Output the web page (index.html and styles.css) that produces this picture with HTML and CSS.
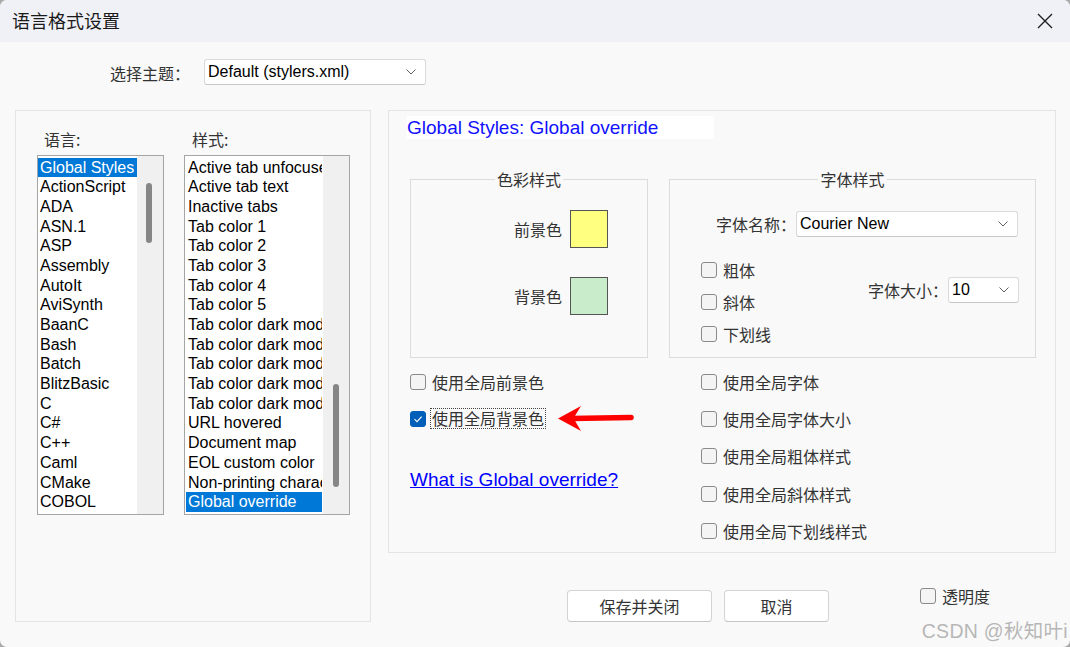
FILE: index.html
```html
<!DOCTYPE html>
<html lang="zh">
<head>
<meta charset="utf-8">
<title>语言格式设置</title>
<link rel="stylesheet" href="styles.css">
</head>
<body>
<div class="window">
  <div class="titlebar">
    <span class="title">语言格式设置</span>
    <svg class="close" width="16" height="16" viewBox="0 0 16 16"><path d="M1 1 L15 15 M15 1 L1 15" stroke="#1f1f1f" stroke-width="1.4" fill="none"/></svg>
  </div>

  <div class="theme-row">
    <span class="lbl">选择主题：</span>
    <div class="select theme-select">
      <span>Default (stylers.xml)</span>
      <svg width="10" height="6" viewBox="0 0 10 6"><path d="M0.5 0.5 L5 5 L9.5 0.5" stroke="#606060" stroke-width="1" fill="none"/></svg>
    </div>
  </div>

  <div class="main">
    <div class="left-panel">
      <span class="lbl list-label lang-label">语言:</span>
      <span class="lbl list-label style-label">样式:</span>

      <div class="listbox lang-list">
        <div class="items">
          <div class="item sel">Global Styles</div>
          <div class="item">ActionScript</div>
          <div class="item">ADA</div>
          <div class="item">ASN.1</div>
          <div class="item">ASP</div>
          <div class="item">Assembly</div>
          <div class="item">AutoIt</div>
          <div class="item">AviSynth</div>
          <div class="item">BaanC</div>
          <div class="item">Bash</div>
          <div class="item">Batch</div>
          <div class="item">BlitzBasic</div>
          <div class="item">C</div>
          <div class="item">C#</div>
          <div class="item">C++</div>
          <div class="item">Caml</div>
          <div class="item">CMake</div>
          <div class="item">COBOL</div>
        </div>
        <div class="scrollbar lang-scroll"><div class="thumb"></div></div>
      </div>

      <div class="listbox style-list">
        <div class="items">
          <div class="item">Active tab unfocused</div>
          <div class="item">Active tab text</div>
          <div class="item">Inactive tabs</div>
          <div class="item">Tab color 1</div>
          <div class="item">Tab color 2</div>
          <div class="item">Tab color 3</div>
          <div class="item">Tab color 4</div>
          <div class="item">Tab color 5</div>
          <div class="item">Tab color dark mode 1</div>
          <div class="item">Tab color dark mode 2</div>
          <div class="item">Tab color dark mode 3</div>
          <div class="item">Tab color dark mode 4</div>
          <div class="item">Tab color dark mode 5</div>
          <div class="item">URL hovered</div>
          <div class="item">Document map</div>
          <div class="item">EOL custom color</div>
          <div class="item">Non-printing characters</div>
          <div class="item sel">Global override</div>
        </div>
        <div class="scrollbar style-scroll"><div class="thumb"></div></div>
      </div>
    </div>

    <div class="right-col">
      <div class="right-panel">
        <div class="rp-title">Global Styles: Global override</div>

        <div class="groups">
          <fieldset class="group color-group">
            <legend>色彩样式</legend>
            <div class="color-grid">
              <span class="lbl">前景色</span>
              <span class="swatch fg"></span>
              <span class="lbl">背景色</span>
              <span class="swatch bg"></span>
            </div>
          </fieldset>

          <fieldset class="group font-group">
            <legend>字体样式</legend>
            <div class="font-name-row">
              <span class="lbl">字体名称：</span>
              <div class="select font-select">
                <span>Courier New</span>
                <svg width="10" height="6" viewBox="0 0 10 6"><path d="M0.5 0.5 L5 5 L9.5 0.5" stroke="#606060" stroke-width="1" fill="none"/></svg>
              </div>
            </div>
            <div class="font-opts">
              <div class="opt-col">
                <div class="check-row small"><span class="cb"></span><span class="lbl">粗体</span></div>
                <div class="check-row small"><span class="cb"></span><span class="lbl">斜体</span></div>
                <div class="check-row small"><span class="cb"></span><span class="lbl">下划线</span></div>
              </div>
              <div class="size-row">
                <span class="lbl">字体大小：</span>
                <div class="select size-select">
                  <span>10</span>
                  <svg width="10" height="6" viewBox="0 0 10 6"><path d="M0.5 0.5 L5 5 L9.5 0.5" stroke="#606060" stroke-width="1" fill="none"/></svg>
                </div>
              </div>
            </div>
          </fieldset>
        </div>

        <div class="checks">
          <div class="check-col">
            <div class="check-row"><span class="cb"></span><span class="lbl">使用全局前景色</span></div>
            <div class="check-row">
              <span class="cb on"><svg width="14" height="14" viewBox="0 0 14 14"><path d="M3.5 7.2 L6 9.6 L10.6 4.6" stroke="#ffffff" stroke-width="1.1" fill="none"/></svg></span>
              <span class="lbl focus">使用全局背景色</span>
              <svg class="arrow" width="78" height="28" viewBox="0 0 78 28"><path d="M14 13.5 L74 12.5" stroke="#ff0000" stroke-width="5.5" stroke-linecap="round" fill="none"/><path d="M1 13.5 L24 1 L16.5 13.3 L24 26 Z" fill="#ff0000"/></svg>
            </div>
            <a class="link" href="#">What is Global override?</a>
          </div>
          <div class="check-col">
            <div class="check-row"><span class="cb"></span><span class="lbl">使用全局字体</span></div>
            <div class="check-row"><span class="cb"></span><span class="lbl">使用全局字体大小</span></div>
            <div class="check-row"><span class="cb"></span><span class="lbl">使用全局粗体样式</span></div>
            <div class="check-row"><span class="cb"></span><span class="lbl">使用全局斜体样式</span></div>
            <div class="check-row"><span class="cb"></span><span class="lbl">使用全局下划线样式</span></div>
          </div>
        </div>
      </div>

      <div class="bottom-row">
        <button class="btn save">保存并关闭</button>
        <button class="btn cancel">取消</button>
        <div class="check-row transp"><span class="cb"></span><span class="lbl">透明度</span></div>
      </div>
    </div>
  </div>

  <div class="watermark">CSDN @秋知叶i</div>
</div>
</body>
</html>
```

FILE: styles.css
```css
* { box-sizing: border-box; }

html, body {
  margin: 0;
  padding: 0;
  background: #a9a9a9;
}

.window {
  position: relative;
  width: 1070px;
  height: 647px;
  background: #f9f9f9;
  border-radius: 7px;
  overflow: hidden;
  font-family: "Liberation Sans", "Noto Sans CJK SC", sans-serif;
  color: #000;
}

.lbl {
  font-family: "Noto Sans CJK SC", "Liberation Sans", sans-serif;
  font-size: 16px;
  color: #333;
  line-height: 20px;
  white-space: nowrap;
}

/* title bar */
.titlebar {
  height: 42px;
  background: #f0f1f6;
  display: flex;
  align-items: center;
  justify-content: space-between;
  padding: 0 17px 0 12px;
}
.title {
  font-family: "Noto Sans CJK SC", sans-serif;
  font-size: 18px;
  color: #1a1a1a;
  line-height: 22px;
  margin-top: -2px;
}
.close { margin-top: -1px; }

/* theme row */
.theme-row {
  display: flex;
  align-items: center;
  margin-top: 17px;
  padding-left: 110px;
  gap: 14px;
}
.theme-row .lbl { margin-top: 2px; }

.select {
  display: flex;
  align-items: center;
  justify-content: space-between;
  height: 26px;
  background: #fff;
  border: 1px solid #dadada;
  border-bottom-color: #c8c8c8;
  border-radius: 3px;
  padding: 0 9px 0 3px;
  font-size: 16px;
  color: #000;
}
.theme-select { width: 222px; }
.font-select { width: 222px; }
.size-select { width: 71px; }

/* main */
.main {
  display: flex;
  margin-top: 25px;
  padding-left: 15px;
  gap: 17px;
}

.left-panel {
  width: 356px;
  height: 512px;
  border: 1px solid #e4e4e4;
  display: grid;
  grid-template-columns: 127px 166px;
  grid-template-rows: 20px auto;
  column-gap: 20px;
  row-gap: 6px;
  padding: 18px 0 0 21px;
  align-content: start;
}
.lang-label { margin-left: 7px; }
.style-label { margin-left: 8px; }

.listbox {
  height: 360px;
  border: 1px solid #a5a5a5;
  background: #fff;
  display: flex;
  overflow: hidden;
}
.items {
  flex: 1;
  min-width: 0;
  padding-top: 1.5px;
}
.item {
  height: 19.7px;
  line-height: 20.5px;
  font-size: 16px;
  padding-left: 2px;
  white-space: nowrap;
  overflow: hidden;
  color: #000;
}
.style-list .item { margin: 0 1px; }
.item.sel {
  background: #0078d7;
  color: #fff;
}
.scrollbar {
  width: 26px;
  flex: none;
  background: #f0f0f0;
}
.thumb {
  width: 6px;
  border-radius: 3px;
  background: #868686;
}
.lang-scroll { padding: 27px 0 0 9px; }
.lang-scroll .thumb { height: 60px; }
.style-scroll { padding: 228px 0 0 10px; }
.style-scroll .thumb { height: 103px; }

/* right column */
.right-col {
  width: 668px;
  display: flex;
  flex-direction: column;
}
.right-panel {
  height: 443px;
  border: 1px solid #e4e4e4;
  padding-top: 5px;
}
.rp-title {
  margin-left: 18px;
  width: 307px;
  height: 23px;
  line-height: 23px;
  background: #fff;
  color: #1111ff;
  font-size: 19px;
  white-space: nowrap;
}

.groups {
  display: flex;
  gap: 21px;
  margin-top: 30px;
  padding-left: 21px;
}
.group {
  margin: 0;
  padding: 0;
  border: 1px solid #dcdcdc;
  height: 189px;
  min-width: 0;
}
.group legend {
  margin: 0 auto;
  padding: 0 2px;
  font-family: "Noto Sans CJK SC", sans-serif;
  font-size: 16px;
  line-height: 20px;
  color: #333;
}
.color-group { width: 238px; }
.font-group { width: 367px; }

.color-grid {
  display: grid;
  grid-template-columns: 151px 38px;
  column-gap: 8px;
  row-gap: 29px;
  align-items: center;
  margin-top: 21px;
}
.color-grid .lbl { text-align: right; }
.swatch {
  width: 38px;
  height: 38px;
  border: 1px solid #555;
}
.swatch.fg { background: #ffff80; }
.swatch.bg { background: #c9edca; }

.font-name-row {
  display: flex;
  align-items: center;
  margin-top: 22px;
  padding-left: 46px;
}
.font-opts {
  display: flex;
  margin-top: 17px;
  padding-left: 31px;
}
.opt-col { display: flex; flex-direction: column; }
.size-row {
  display: flex;
  align-items: center;
  margin-left: auto;
  margin-right: 16px;
  margin-top: 23px;
  align-self: flex-start;
}

/* check rows */
.check-row {
  display: flex;
  align-items: center;
  gap: 6px;
  height: 37.3px;
}
.check-row.small { height: 32px; }
.cb {
  width: 16px;
  height: 16px;
  flex: none;
  border: 1px solid #8a8a8a;
  border-radius: 3px;
  background: #f4f4f4;
  display: flex;
  align-items: center;
  justify-content: center;
}
.cb.on {
  background: #005fb8;
  border-color: #005fb8;
}
.lbl.focus {
  margin-left: -2px;
  padding: 0 1px;
  border: 1px dotted #444;
  line-height: 19px;
}
.arrow { margin-left: 5px; margin-top: 1px; }

.checks {
  display: grid;
  grid-template-columns: 291px 1fr;
  margin-top: 5px;
  padding-left: 21px;
}
.check-col { display: flex; flex-direction: column; }
.link {
  margin-top: 30px;
  font-size: 19px;
  line-height: 24px;
  color: #0000ff;
  text-decoration: underline;
  align-self: flex-start;
}

/* bottom */
.bottom-row {
  display: flex;
  align-items: flex-start;
  margin-top: 37px;
  padding-left: 179px;
}
.btn {
  height: 32px;
  background: #fff;
  border: 1px solid #d3d3d3;
  border-bottom-color: #c4c4c4;
  border-radius: 4px;
  font-family: "Noto Sans CJK SC", sans-serif;
  font-size: 16px;
  color: #333;
  padding: 0;
}
.save { width: 145px; }
.cancel { width: 105px; margin-left: 12px; }
.transp {
  height: 20px;
  margin-left: 91px;
  margin-top: -4px;
}

.watermark {
  position: absolute;
  right: 2px;
  bottom: 5px;
  font-family: "Liberation Sans", "Noto Sans CJK SC", sans-serif;
  font-size: 19.5px;
  line-height: 22px;
  letter-spacing: 0.3px;
  color: rgba(160, 160, 160, 0.75);
  white-space: nowrap;
}
```
